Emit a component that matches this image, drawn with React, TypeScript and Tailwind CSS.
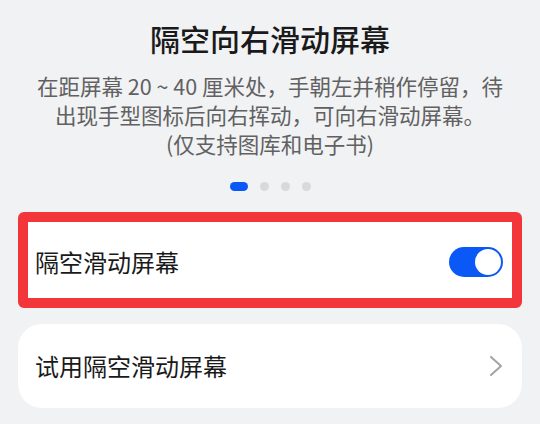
import { useState } from "react";

/**
 * 隔空滑动屏幕 设置页
 */
export default function App() {
  const [enabled, setEnabled] = useState(true);

  return (
    <div
      className="w-[540px] h-[424px] overflow-hidden bg-[#f1f2f4] flex flex-col"
      style={{ fontFamily: '"Noto Sans CJK SC", "Noto Sans", sans-serif' }}
    >
      {/* 标题 */}
      <h1 className="pt-[18px] text-center text-[30px] leading-[40px] font-medium text-[#1a1a1a]">
        隔空向右滑动屏幕
      </h1>

      {/* 说明 */}
      <p className="mt-[13px] text-center text-[21.5px] leading-[29px] text-[#616161]">
        在距屏幕 20 ~ 40 厘米处，手朝左并稍作停留，待
        <br />
        出现手型图标后向右挥动，可向右滑动屏幕。
        <br />
        (仅支持图库和电子书)
      </p>

      {/* 分页指示 */}
      <div className="mt-[24px] flex items-center justify-center gap-[12px]">
        <span className="w-[18px] h-[9px] rounded-full bg-[#0a59f7]" />
        <span className="w-[9px] h-[9px] rounded-full bg-[#d8d9db]" />
        <span className="w-[9px] h-[9px] rounded-full bg-[#d8d9db]" />
        <span className="w-[9px] h-[9px] rounded-full bg-[#d8d9db]" />
      </div>

      {/* 开关 */}
      <div className="mt-[21px] mx-[18px] h-[96px] rounded-[6px] border-[10px] border-[#f3363a] bg-white flex items-center justify-between pl-[7px] pr-[9px] pt-[4px]">
        <span className="text-[24px] leading-[32px] text-[#1a1a1a]">
          隔空滑动屏幕
        </span>
        <button
          onClick={() => setEnabled(!enabled)}
          className={`w-[54px] h-[30px] rounded-full flex items-center px-[2px] ${
            enabled ? "bg-[#0a59f7] justify-end" : "bg-[#d8d9db] justify-start"
          }`}
          aria-label="隔空滑动屏幕"
        >
          <span className="w-[26px] h-[26px] rounded-full bg-white" />
        </button>
      </div>

      {/* 试用 */}
      <div className="mt-[16px] mx-[18px] h-[84px] rounded-[24px] bg-white flex items-center justify-between pl-[17px] pr-[19px]">
        <span className="text-[24px] leading-[32px] text-[#1a1a1a]">
          试用隔空滑动屏幕
        </span>
        <svg
          className="w-[14px] h-[22px] text-[#a3a3a3]"
          viewBox="0 0 14 22"
          fill="none"
          stroke="currentColor"
        >
          <path
            strokeLinecap="round"
            strokeLinejoin="round"
            strokeWidth={2}
            d="M2 2l10 9-10 9"
          />
        </svg>
      </div>
    </div>
  );
}
